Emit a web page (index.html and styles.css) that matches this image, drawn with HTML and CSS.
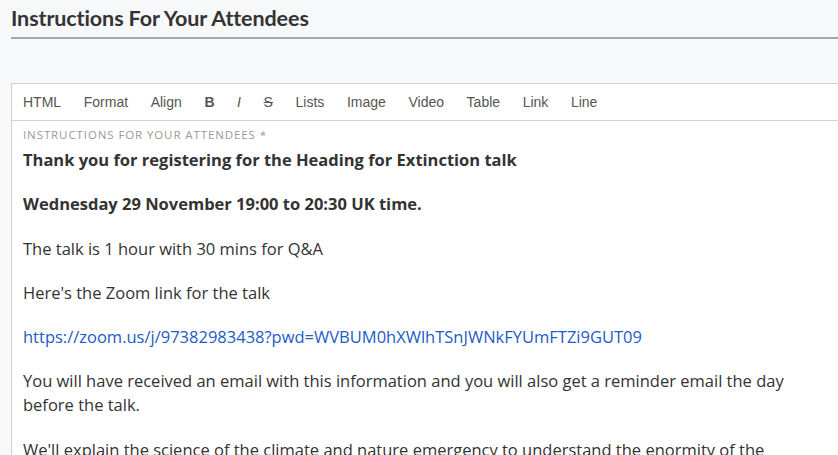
FILE: index.html
```html
<!DOCTYPE html>
<html>
<head>
<meta charset="utf-8">
<link rel="stylesheet" href="styles.css">
</head>
<body>
<div class="page">
  <h2 class="title">Instructions For Your Attendees</h2>
  <div class="editor">
    <div class="toolbar">
      <span class="tb">HTML</span>
      <span class="tb">Format</span>
      <span class="tb">Align</span>
      <span class="tb bold">B</span>
      <span class="tb ital">I</span>
      <span class="tb strike">S</span>
      <span class="tb">Lists</span>
      <span class="tb">Image</span>
      <span class="tb">Video</span>
      <span class="tb">Table</span>
      <span class="tb">Link</span>
      <span class="tb">Line</span>
    </div>
    <div class="content">
      <div class="label">INSTRUCTIONS FOR YOUR ATTENDEES *</div>
      <p class="first"><strong>Thank you for registering for the Heading for Extinction talk</strong></p>
      <p><strong>Wednesday 29 November 19:00 to 20:30 UK time.</strong></p>
      <p>The talk is 1 hour with 30 mins for Q&amp;A</p>
      <p>Here's the Zoom link for the talk</p>
      <p><a href="#">https://zoom.us/j/97382983438?pwd=WVBUM0hXWlhTSnJWNkFYUmFTZi9GUT09</a></p>
      <p>You will have received an email with this information and you will also get a reminder email the day before the talk.</p>
      <p>We'll explain the science of the climate and nature emergency to understand the enormity of the situation.</p>
    </div>
  </div>
</div>
</body>
</html>
```
FILE: styles.css
```css
html, body {
  margin: 0;
  padding: 0;
  background: #f7f8fa;
  overflow: hidden;
  height: 455px;
}
.page {
  padding-left: 11px;
}
.title {
  margin: 0;
  font-family: Lato, "Liberation Sans", sans-serif;
  font-weight: 700;
  font-size: 21.5px;
  color: #333;
  line-height: 24px;
  padding-top: 6px;
  padding-bottom: 7px;
  border-bottom: 2px solid #a7a7a9;
  letter-spacing: -0.1px;
}
.editor {
  margin-top: 44px;
  background: #fff;
  border: 1px solid #cfcfcf;
  border-right: none;
}
.toolbar {
  display: flex;
  align-items: center;
  height: 36px;
  padding-left: 11px;
  gap: 22.6px;
  border-bottom: 1px solid #d3d3d3;
  font-family: "Liberation Sans", Arial, sans-serif;
  font-size: 14px;
  color: #555;
}
.tb.bold { font-weight: 700; }
.tb.ital { font-style: italic; }
.tb.strike { text-decoration: line-through; }
.content {
  padding: 7px 11px 0 11px;
  font-family: "Open Sans", sans-serif;
  font-size: 16.5px;
  line-height: 24px;
  color: #333;
}
.label {
  font-size: 11.5px;
  line-height: 14px;
  color: #999;
  letter-spacing: 0.9px;
  margin-bottom: 6px;
}
.content p {
  margin: 0 0 20.25px 0;
  max-width: 780px;
}
.content a {
  color: #1e5bc6;
  text-decoration: none;
}
```
